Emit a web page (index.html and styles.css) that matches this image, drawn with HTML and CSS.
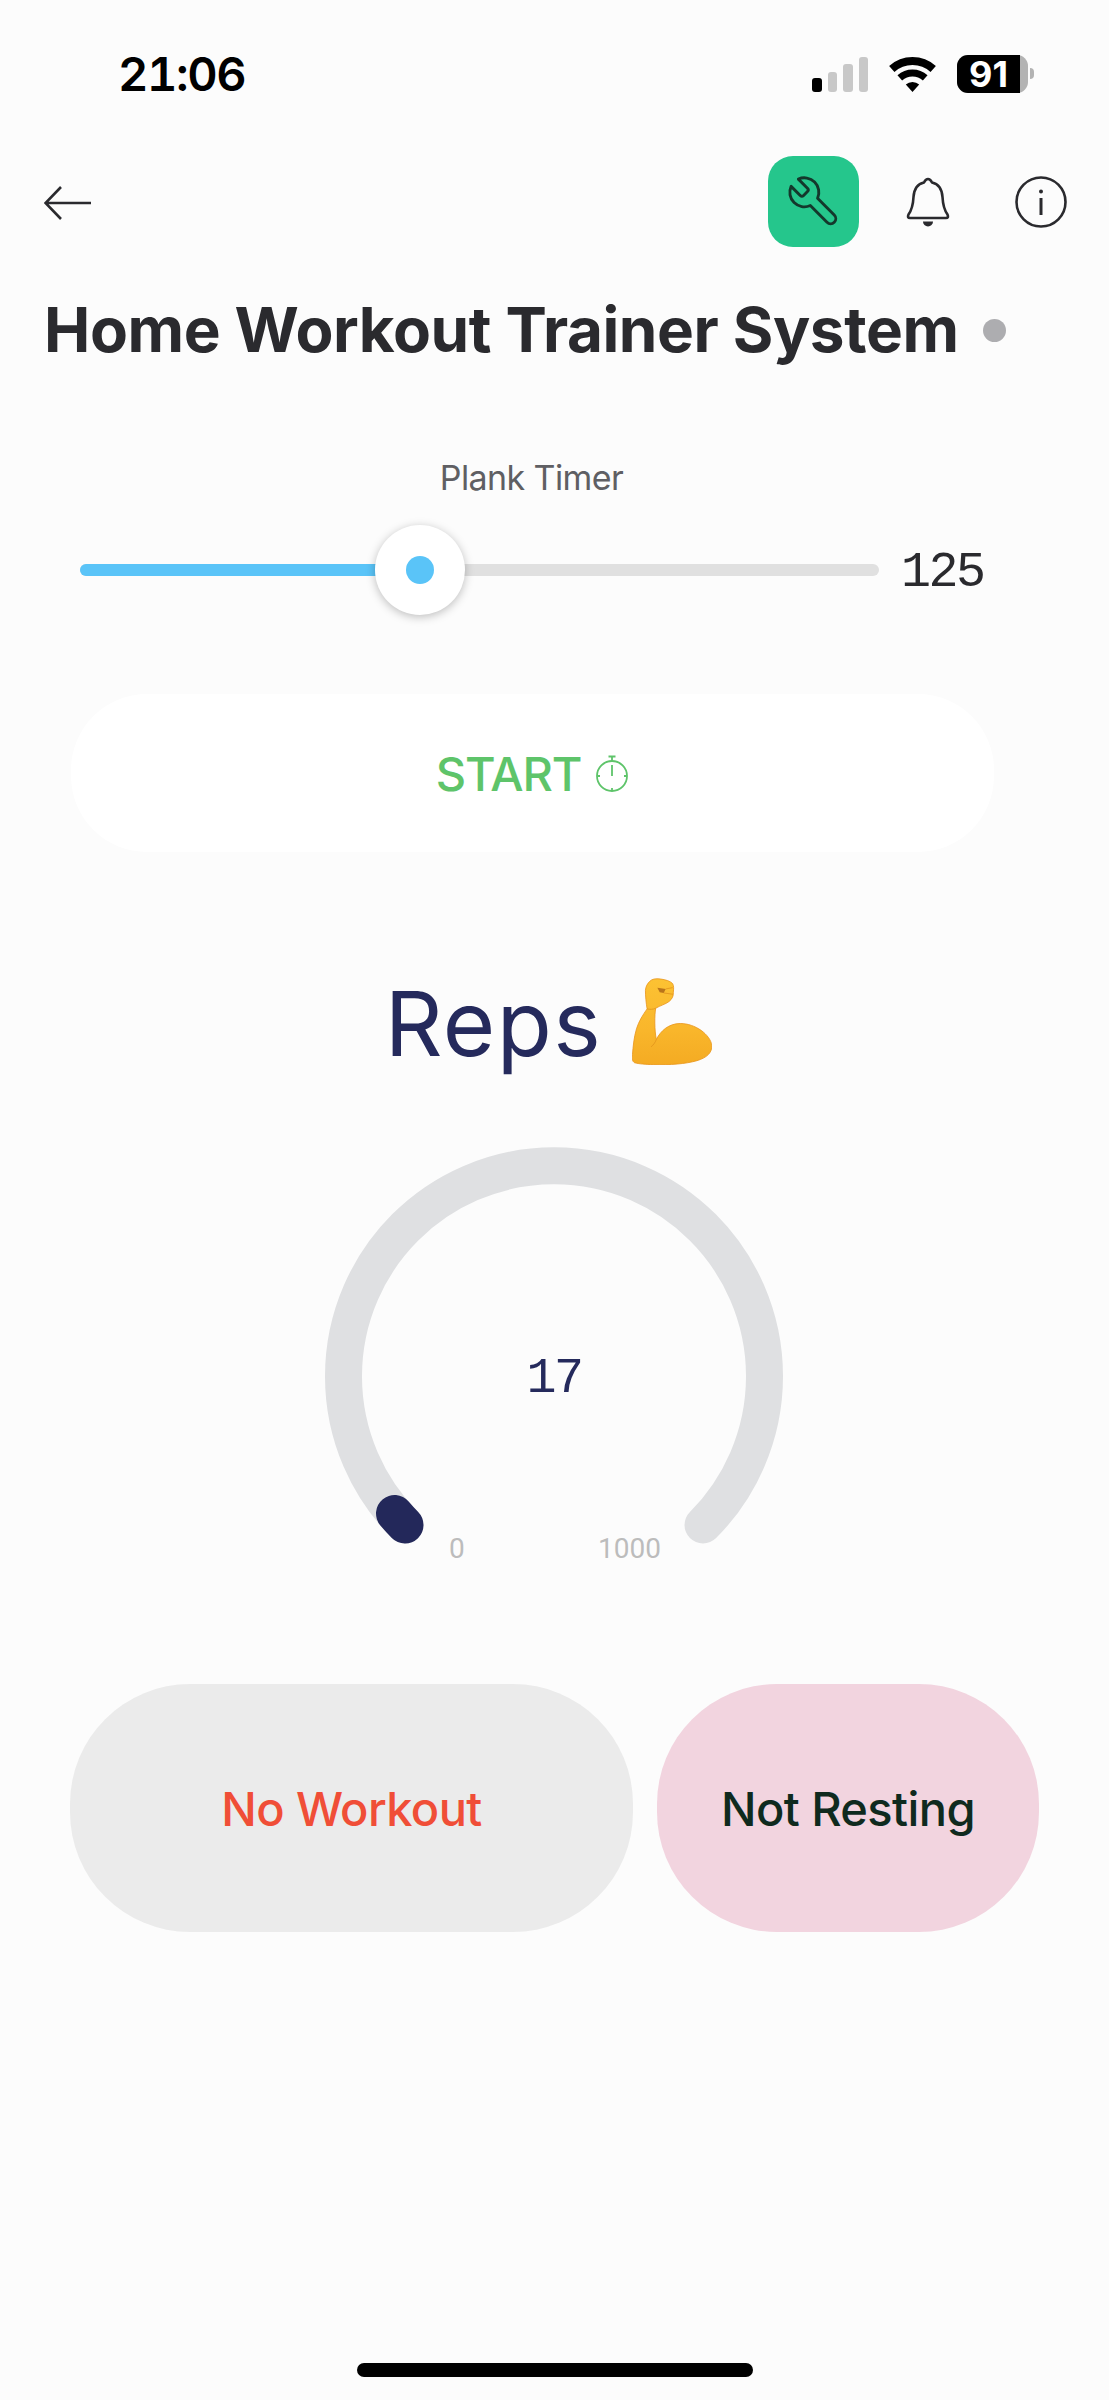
FILE: index.html
```html
<!DOCTYPE html>
<html lang="en">
<head>
  <meta charset="UTF-8">
  <meta name="viewport" content="width=device-width, initial-scale=1.0">
  <title>Home Workout Trainer System</title>
  <link rel="stylesheet" href="styles.css">
</head>
<body>
  <div class="page">
    <!-- status bar -->
    <div class="status">
      <span class="time">21:06</span>
      <div class="status-icons">
        <div class="signal">
          <span class="bar bar1 on"></span>
          <span class="bar bar2"></span>
          <span class="bar bar3"></span>
          <span class="bar bar4"></span>
        </div>
        <svg class="wifi" width="47" height="35" viewBox="0 0 47 35" fill="none" stroke="#000">
          <path d="M2.8 12A31 31 0 0 1 44.2 12" stroke-width="8"/>
          <path d="M10.8 20.9A19 19 0 0 1 36.2 20.9" stroke-width="7"/>
          <path d="M23.5 35L16.8 27.6A10 10 0 0 1 30.2 27.6Z" fill="#000" stroke="none"/>
        </svg>
        <div class="battery">
          <div class="battery-body"><div class="battery-level">91</div></div>
          <span class="battery-nub"></span>
        </div>
      </div>
    </div>

    <!-- top toolbar -->
    <div class="toolbar">
      <svg class="back" width="48" height="34" viewBox="0 0 48 34" fill="none" stroke="#2a2a2e" stroke-width="2.6">
        <path d="M47 17H2M17 1L1.5 17L17 33"/>
      </svg>
      <div class="tool-btn">
        <svg class="wrench" width="58" height="58" viewBox="0 0 24 24" fill="none" stroke="#14382c" stroke-width="1.2" stroke-linejoin="round">
          <path d="M14.7 6.3a1 1 0 0 0 0 1.4l1.6 1.6a1 1 0 0 0 1.4 0l3.77-3.77a6 6 0 0 1-7.94 7.94l-6.91 6.91a2.12 2.12 0 0 1-3-3l6.91-6.91a6 6 0 0 1 7.94-7.94l-3.76 3.76z"/>
        </svg>
      </div>
      <svg class="bell" width="44" height="50" viewBox="0 0 44 50" fill="none" stroke="#2a2a2e" stroke-width="2.6" stroke-linejoin="round">
        <path d="M22 2C20 2 19 3.500 18 5.500C11 7 8 13 7.500 20C7 30 5 34 2.500 37.500Q1 41 4 41H40Q43 41 41.500 37.500C39 34 37 30 36.500 20C36 13 33 7 26 5.500C25 3.500 24 2 22 2Z"/>
        <path d="M17 44.500H27A5 5 0 0 1 17 44.500Z" fill="#2a2a2e" stroke="none"/>
      </svg>
      <svg class="info" width="52" height="52" viewBox="0 0 52 52" fill="none" stroke="#2a2a2e" stroke-width="2.6">
        <circle cx="26" cy="26" r="24.500"/>
        <circle cx="26" cy="15.500" r="2" fill="#2a2a2e" stroke="none"/>
        <rect x="24.500" y="22" width="3" height="17" fill="#2a2a2e" stroke="none"/>
      </svg>
    </div>

    <h1 class="title">Home Workout Trainer System <span class="title-dot"></span></h1>

    <!-- plank timer slider -->
    <div class="slider-block">
      <div class="slider-label">Plank Timer</div>
      <div class="slider-row">
        <div class="track">
          <div class="track-fill" style="width:42.6%">
            <div class="thumb"><span class="thumb-dot"></span></div>
          </div>
        </div>
        <span class="slider-value">125</span>
      </div>
    </div>

    <div class="start-btn">
      <span>START</span>
      <svg class="stopwatch" width="34" height="37" viewBox="0 0 34 37" fill="none" stroke="#5ec46a" stroke-width="1.800">
        <circle cx="17" cy="21" r="15"/>
        <path d="M17 6V2M13.500 1.500H20.500M17 21V10M2.500 21H5M29 21H31.500M17 33V36"/>
      </svg>
    </div>

    <h2 class="reps-title">
      <span class="reps-text">Reps</span>
      <svg class="muscle" width="80" height="87" viewBox="65 55 240 262">
        <defs>
          <linearGradient id="skin" x1="0" y1="0" x2="0" y2="1">
            <stop offset="0" stop-color="#fcc233"/>
            <stop offset="0.6" stop-color="#f9b62b"/>
            <stop offset="1" stop-color="#f4ab23"/>
          </linearGradient>
        </defs>
        <path d="M118 65C125 58 135 56 150 58C165 60 180 64 187 72C191 80 190 88 189 98C190 108 186 118 176 126C165 134 150 138 136 146C132 165 132 215 138 240C150 215 175 192 210 192C255 192 300 225 305 258C306 280 290 295 260 304C225 314 180 317 130 316C105 315 85 314 72 310C66 306 64 300 66 285C68 262 70 235 78 208C85 185 98 165 110 148C107 130 105 110 105 92C106 80 111 72 118 65Z" fill="url(#skin)" stroke="#e9961c" stroke-width="2.500"/>
        <path d="M141 84L166 88L160 100L148 98Z" fill="#b9741a"/>
        <path d="M166 88L187 84M160 100L188 104M110 148C118 150 128 150 136 146M138 240C134 250 128 258 122 262" fill="none" stroke="#e2931c" stroke-width="2.500"/>
      </svg>
    </h2>

    <!-- reps gauge -->
    <div class="gauge">
      <svg class="gauge-arc" width="458" height="413" viewBox="0 0 458 413" fill="none" stroke-linecap="round" stroke-width="37">
        <path d="M80 378A210.500 210.500 0 1 1 378 378" stroke="#dfe0e2"/>
        <path d="M80 378A210.500 210.500 0 0 1 69.500 366.500" stroke="#23285a"/>
      </svg>
      <span class="gauge-value">17</span>
      <span class="gauge-min">0</span>
      <span class="gauge-max">1000</span>
    </div>

    <div class="status-row">
      <div class="pill pill-workout">No Workout</div>
      <div class="pill pill-rest">Not Resting</div>
    </div>

    <div class="home-indicator"></div>
  </div>
</body>
</html>
```

FILE: styles.css
```css
html, body {
  margin: 0;
  padding: 0;
  background-color: #fcfcfc;
}
.page {
  width: 1109px;
  height: 2400px;
  display: flex;
  flex-direction: column;
  font-family: Inter, "Liberation Sans", sans-serif;
  overflow: hidden;
}

/* status bar */
.status {
  display: flex;
  justify-content: space-between;
  align-items: center;
  height: 38px;
  margin-top: 54px;
  padding: 0 75px 0 118px;
}
.time {
  font-size: 47px;
  font-weight: 600;
  color: #000;
  font-variant-numeric: tabular-nums;
  letter-spacing: -1.400px;
}
.status-icons {
  display: flex;
  align-items: flex-end;
  gap: 21px;
}
.signal {
  display: flex;
  align-items: flex-end;
  gap: 6px;
}
.bar {
  width: 9.500px;
  background-color: #c8c8c8;
  border-radius: 3px;
}
.bar.on {
  background-color: #000;
}
.bar1 { height: 14px; }
.bar2 { height: 20px; }
.bar3 { height: 28px; }
.bar4 { height: 35px; }
.wifi {
  display: block;
}
.battery {
  display: flex;
  align-items: center;
  gap: 2px;
  margin-bottom: -1px;
}
.battery-body {
  width: 71px;
  height: 38px;
  background-color: #b3b3b3;
  border-radius: 11px;
}
.battery-level {
  width: 63px;
  height: 100%;
  background-color: #000;
  border-radius: 11px 0 0 11px;
  color: #fff;
  font-size: 36px;
  font-weight: 700;
  line-height: 38px;
  text-align: center;
}
.battery-nub {
  width: 4px;
  height: 11px;
  background-color: #b3b3b3;
  border-radius: 0 4px 4px 0;
}

/* toolbar */
.toolbar {
  display: flex;
  align-items: center;
  height: 91px;
  margin-top: 64px;
  padding: 0 42px 0 44px;
}
.back {
  margin-right: auto;
  margin-top: 3px;
}
.tool-btn {
  width: 91px;
  height: 91px;
  display: flex;
  justify-content: center;
  align-items: center;
  background-color: #25c68c;
  border-radius: 25px;
}
.wrench {
  transform: scaleX(-1);
}
.bell {
  margin-left: 47px;
}
.info {
  margin-left: 65px;
}

/* title */
.title {
  display: flex;
  align-items: center;
  gap: 24px;
  margin: 45px 0 0 0;
  padding-left: 44px;
  font-size: 62px;
  line-height: 76px;
  font-weight: 700;
  color: #2a2a2e;
  letter-spacing: -0.400px;
}
.title-dot {
  width: 23px;
  height: 23px;
  border-radius: 50%;
  background-color: #adadb0;
}

/* slider */
.slider-block {
  width: 903px;
  margin: 90px 0 0 80px;
}
.slider-label {
  height: 40px;
  line-height: 40px;
  text-align: center;
  font-size: 34px;
  letter-spacing: -0.600px;
  color: #5f5f63;
}
.slider-row {
  display: flex;
  align-items: center;
  gap: 22px;
  height: 91px;
  margin-top: 26px;
}
.track {
  flex: 1;
  height: 12px;
  border-radius: 6px;
  background-color: #e0e0e0;
}
.track-fill {
  position: relative;
  height: 100%;
  border-radius: 6px;
  background-color: #5ac4f8;
}
.thumb {
  position: absolute;
  right: -45px;
  top: -39px;
  width: 90px;
  height: 90px;
  display: flex;
  justify-content: center;
  align-items: center;
  border-radius: 50%;
  background-color: #fff;
  box-shadow: 0 2px 10px rgba(0, 0, 0, 0.25);
}
.thumb-dot {
  width: 28px;
  height: 28px;
  border-radius: 50%;
  background-color: #5ac4f8;
}
.slider-value {
  width: 82px;
  margin-top: 5px;
  font-family: "Liberation Mono", monospace;
  font-size: 50px;
  letter-spacing: -2.500px;
  color: #2a2a2e;
}

/* start button */
.start-btn {
  display: flex;
  justify-content: center;
  align-items: center;
  gap: 14px;
  width: 923px;
  height: 158px;
  margin: 79px 0 0 71px;
  border-radius: 76px;
  background-color: #fff;
  font-size: 47px;
  font-weight: 500;
  letter-spacing: -1.200px;
  color: #5ec46a;
}

/* reps */
.reps-title {
  display: flex;
  justify-content: center;
  align-items: center;
  gap: 30px;
  width: 1097px;
  height: 110px;
  margin: 114px 0 0 0;
  font-size: 90px;
  font-weight: 400;
  letter-spacing: 1.500px;
  color: #252a5c;
}
.reps-text {
  margin-top: 4px;
}
.gauge {
  position: relative;
  width: 458px;
  height: 413px;
  margin: 71px 0 0 325px;
}
.gauge-arc {
  display: block;
}
.gauge-value {
  position: absolute;
  left: 0;
  right: 0;
  top: 208px;
  text-align: center;
  font-family: "Liberation Mono", monospace;
  font-size: 50px;
  letter-spacing: -2.500px;
  line-height: 48px;
  color: #252a5c;
}
.gauge-min,
.gauge-max {
  position: absolute;
  top: 385px;
  font-family: Roboto, sans-serif;
  font-size: 28px;
  line-height: 34px;
  color: #bcbcbc;
}
.gauge-min {
  left: 124px;
}
.gauge-max {
  left: 273px;
}

/* bottom pills */
.status-row {
  display: flex;
  gap: 24px;
  margin: 124px 0 0 70px;
}
.pill {
  display: flex;
  justify-content: center;
  align-items: center;
  height: 248px;
  border-radius: 120px;
  font-size: 47px;
  font-weight: 500;
  letter-spacing: -0.600px;
}
.pill-workout {
  width: 563px;
  background-color: #ebebeb;
  color: #f04e37;
}
.pill-rest {
  width: 382px;
  background-color: #f2d4df;
  color: #0f2a1e;
}

.home-indicator {
  width: 396px;
  height: 14px;
  margin: auto 0 23px 357px;
  border-radius: 7px;
  background-color: #000;
}
```
